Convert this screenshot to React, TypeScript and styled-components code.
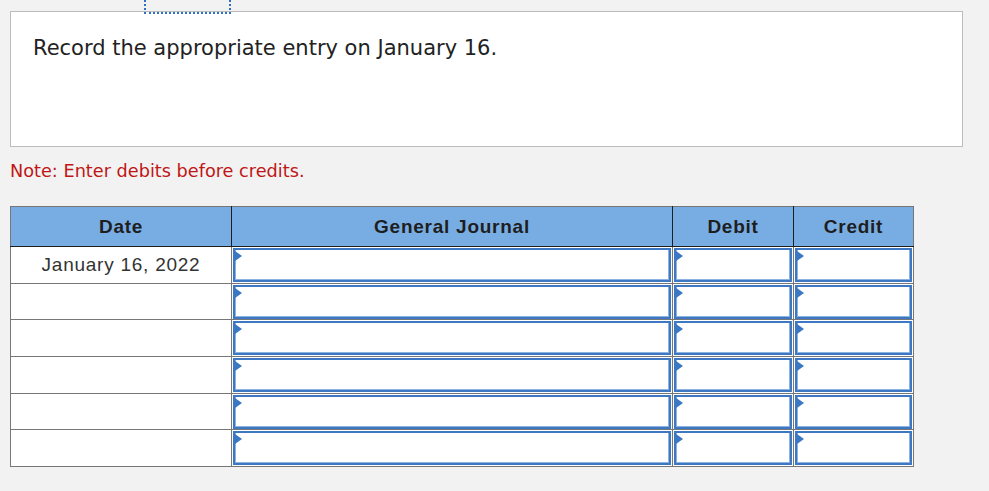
import styled, { createGlobalStyle } from "styled-components";

const GlobalStyle = createGlobalStyle`
  html, body {
    margin: 0;
    padding: 0;
    background: #f2f2f2;
  }
`;

const rows = ["January 16, 2022", "", "", "", "", ""];

const App = () => {
  return (
    <>
      <GlobalStyle />
      <Page>
        <FocusMarker />
        <Question>Record the appropriate entry on January 16.</Question>
        <Note>Note: Enter debits before credits.</Note>
        <Journal>
          <colgroup>
            <col style={{ width: 221 }} />
            <col style={{ width: 441 }} />
            <col style={{ width: 121 }} />
            <col style={{ width: 120 }} />
          </colgroup>
          <thead>
            <tr>
              <HeadCell>Date</HeadCell>
              <HeadCell>General Journal</HeadCell>
              <HeadCell>Debit</HeadCell>
              <HeadCell>Credit</HeadCell>
            </tr>
          </thead>
          <tbody>
            {rows.map((date, i) => (
              <Row key={i}>
                <DateCell>{date}</DateCell>
                <EntryCell>
                  <Entry />
                </EntryCell>
                <EntryCell>
                  <Entry />
                </EntryCell>
                <EntryCell>
                  <Entry />
                </EntryCell>
              </Row>
            ))}
          </tbody>
        </Journal>
      </Page>
    </>
  );
};

const Page = styled.div`
  position: relative;
  padding: 11px 0 0 10px;
  height: 480px;
`;

// focus outline of an element scrolled above the view
const FocusMarker = styled.div`
  position: absolute;
  left: 144px;
  top: -20px;
  width: 83px;
  height: 30px;
  border: 2px dotted #2f6fc4;
`;

const Question = styled.div`
  width: 929px;
  height: 110px;
  background: #fff;
  border: 1px solid #bcbcbc;
  padding: 24px 0 0 22px;
  font-family: "DejaVu Sans", Verdana, sans-serif;
  font-size: 21px;
  line-height: 24px;
  color: #222;
`;

const Note = styled.div`
  margin-top: 13px;
  font-family: "DejaVu Sans", Verdana, sans-serif;
  font-size: 17.7px;
  line-height: 22px;
  color: #c01616;
`;

const Journal = styled.table`
  margin-top: 24px;
  border-collapse: collapse;
  table-layout: fixed;
  width: 903px;
  border: 1px solid #777;
  font-family: "Liberation Sans", Arial, sans-serif;
  font-size: 19px;
  letter-spacing: 0.75px;
`;

const HeadCell = styled.th`
  height: 39px;
  padding: 0;
  background: #78ade4;
  color: #1e1e1e;
  font-weight: bold;
  text-align: center;
  vertical-align: middle;
  border: 1px solid #1e1e1e;
  border-top-color: #777;
  &:first-child {
    border-left-color: #777;
  }
  &:last-child {
    border-right-color: #777;
  }
`;

const Row = styled.tr`
  height: 36.7px;
`;

const DateCell = styled.td`
  padding: 0;
  background: #fff;
  color: #333;
  text-align: center;
  vertical-align: middle;
  border: 1px solid #777;
`;

const EntryCell = styled.td`
  padding: 1px 1px 0 1px;
  background: #fff;
  border: 1px solid #777;
  vertical-align: top;
`;

const Entry = styled.div`
  position: relative;
  height: 34px;
  box-sizing: border-box;
  background: #fff;
  border: 2px solid #3f78c2;
  box-shadow: inset 1px 0 0 #8cb2e2, inset -1px 0 0 #8cb2e2,
    inset 0 -1px 0 #8cb2e2;

  &::before {
    content: "";
    position: absolute;
    top: 1px;
    left: 0;
    border-left: 7px solid #3a78c4;
    border-top: 5px solid transparent;
    border-bottom: 5px solid transparent;
  }
`;

export default App;
